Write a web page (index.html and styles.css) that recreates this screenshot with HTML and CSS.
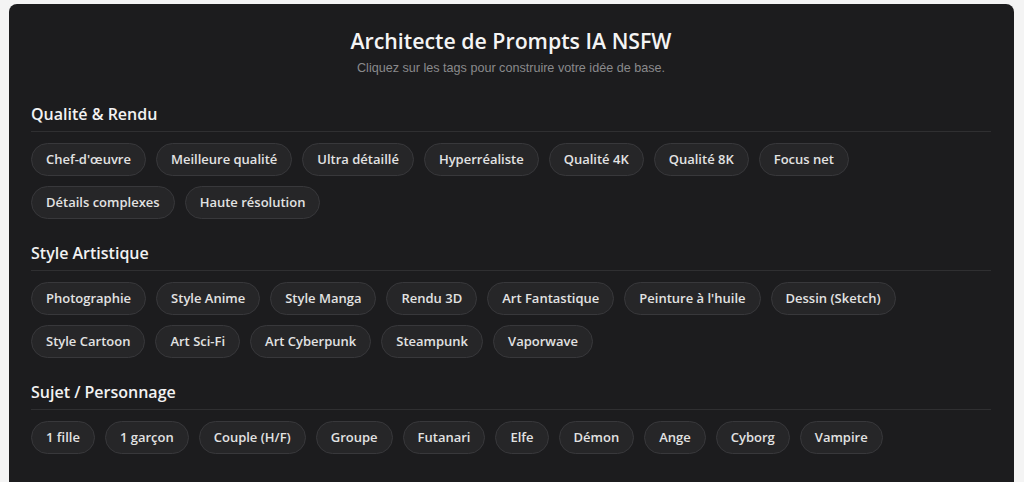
FILE: index.html
```html
<!DOCTYPE html>
<html lang="fr">
<head>
<meta charset="utf-8">
<title>Architecte de Prompts IA NSFW</title>
<link rel="stylesheet" href="styles.css">
</head>
<body>
<main class="card">
  <header class="header">
    <h1 class="title">Architecte de Prompts IA NSFW</h1>
    <p class="subtitle">Cliquez sur les tags pour construire votre idée de base.</p>
  </header>

  <section class="section">
    <h2 class="section-title">Qualité &amp; Rendu</h2>
    <div class="tags">
      <button class="tag">Chef-d'œuvre</button>
      <button class="tag">Meilleure qualité</button>
      <button class="tag">Ultra détaillé</button>
      <button class="tag">Hyperréaliste</button>
      <button class="tag">Qualité 4K</button>
      <button class="tag">Qualité 8K</button>
      <button class="tag">Focus net</button>
      <button class="tag">Détails complexes</button>
      <button class="tag">Haute résolution</button>
    </div>
  </section>

  <section class="section">
    <h2 class="section-title">Style Artistique</h2>
    <div class="tags">
      <button class="tag">Photographie</button>
      <button class="tag">Style Anime</button>
      <button class="tag">Style Manga</button>
      <button class="tag">Rendu 3D</button>
      <button class="tag">Art Fantastique</button>
      <button class="tag">Peinture à l'huile</button>
      <button class="tag">Dessin (Sketch)</button>
      <button class="tag">Style Cartoon</button>
      <button class="tag">Art Sci-Fi</button>
      <button class="tag">Art Cyberpunk</button>
      <button class="tag">Steampunk</button>
      <button class="tag">Vaporwave</button>
    </div>
  </section>

  <section class="section">
    <h2 class="section-title">Sujet / Personnage</h2>
    <div class="tags">
      <button class="tag">1 fille</button>
      <button class="tag">1 garçon</button>
      <button class="tag">Couple (H/F)</button>
      <button class="tag">Groupe</button>
      <button class="tag">Futanari</button>
      <button class="tag">Elfe</button>
      <button class="tag">Démon</button>
      <button class="tag">Ange</button>
      <button class="tag">Cyborg</button>
      <button class="tag">Vampire</button>
    </div>
  </section>

  <section class="section">
    <h2 class="section-title">Corps &amp; Cheveux</h2>
  </section>
</main>
</body>
</html>
```

FILE: styles.css
```css
html, body {
  margin: 0;
  padding: 0;
}

body {
  background: #f4f4f4;
  padding: 4px 10px 0 9px;
  font-family: "Open Sans", "Liberation Sans", sans-serif;
  overflow: hidden;
  height: 482px;
  box-sizing: border-box;
}

.card {
  background: #1c1c1e;
  border-radius: 8px;
  padding: 23px 23px 40px 22px;
  min-height: 600px;
  box-sizing: border-box;
}

.header {
  text-align: center;
  margin-bottom: 28px;
}

.title {
  margin: 0;
  font-size: 21.3px;
  line-height: 28px;
  font-weight: 600;
  color: #f4f4f4;
}

.subtitle {
  margin: 5px 0 0;
  font-family: "Liberation Sans", Arial, sans-serif;
  font-size: 12.6px;
  line-height: 16px;
  color: #8a8a8c;
}

.section {
  margin-bottom: 24px;
}

.section-title {
  margin: 0 0 11px;
  padding-bottom: 7px;
  border-bottom: 1px solid #2f2f31;
  font-size: 16px;
  line-height: 20px;
  font-weight: 600;
  color: #f2f2f2;
}

.tags {
  display: flex;
  flex-wrap: wrap;
  gap: 10px;
}

.tag {
  font-family: "Open Sans", "Liberation Sans", sans-serif;
  font-size: 13px;
  line-height: 15px;
  font-weight: 600;
  color: #e2e2e2;
  background: #262628;
  border: 1px solid #38383b;
  border-radius: 999px;
  padding: 8px 14px;
  margin: 0;
  cursor: pointer;
}
```
